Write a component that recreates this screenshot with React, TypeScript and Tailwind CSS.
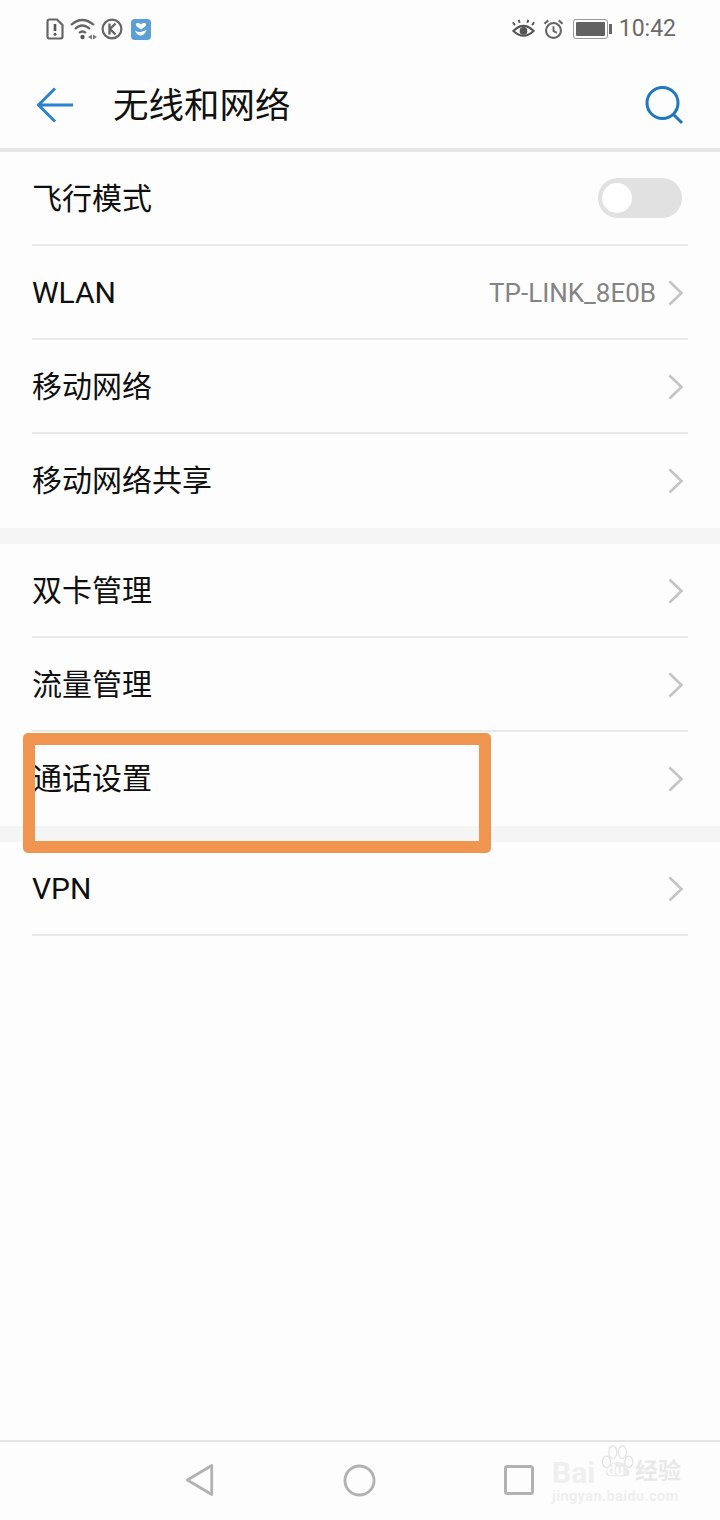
const font = "font-['Roboto','Noto_Sans_CJK_SC',sans-serif]";

const Chevron = () => (
	<svg width="18" height="28" viewBox="0 0 18 28" fill="none" className="mr-[3px] shrink-0">
		<path d="M2.5 2.5 L14.5 14 L2.5 25.5" stroke="#c4c4c4" strokeWidth="2.6" />
	</svg>
);

type RowProps = {
	label: string;
	value?: string;
	last?: boolean;
	height: string;
};

const Row = ({ label, value, last, height }: RowProps) => (
	<div className={`mx-8 flex items-center justify-between ${height} ${last ? '' : 'border-b-2 border-[#e9e9e9] pt-[2px]'}`}>
		<span className="text-[30px] leading-none text-[#0f0f0f]">{label}</span>
		<div className="flex items-center">
			{value && <span className="mr-[11px] text-[26px] leading-none text-[#848484]">{value}</span>}
			<Chevron />
		</div>
	</div>
);

const StatusLeft = () => (
	<div className="flex items-center gap-[3px]">
		<svg width="18" height="22" viewBox="0 0 18 22" fill="none">
			<path d="M3.5 1.5 H11 L16.500 7 V18.5 Q16.500 20.500 14.5 20.500 H3.5 Q1.500 20.500 1.500 18.5 V3.5 Q1.500 1.500 3.5 1.500 Z" stroke="#666" strokeWidth="2.2" />
			<path d="M9 6 V13" stroke="#555" strokeWidth="2.6" />
			<circle cx="9" cy="16.3" r="1.5" fill="#555" />
		</svg>
		<svg width="28" height="24" viewBox="0 0 28 24" fill="none" className="ml-[3px]">
			<path d="M1 8 Q12 -2 24 8" stroke="#666" strokeWidth="2.2" />
			<path d="M5 12 Q12 5 20 12" stroke="#666" strokeWidth="2.2" />
			<path d="M9 16 Q12.500 13 16 16" stroke="#666" strokeWidth="2.2" />
			<circle cx="12.500" cy="20" r="2.200" fill="#555" />
			<path d="M18 20 L22 17.500 V22.500 Z M23 17.500 L27 20 L23 22.500 Z" fill="#777" />
		</svg>
		<svg width="22" height="22" viewBox="0 0 22 22" fill="none">
			<circle cx="11" cy="11" r="9.400" stroke="#666" strokeWidth="2.200" />
			<path d="M8.500 5.500 V16.500 M14.500 5.500 L9 11 L14.500 16.500" stroke="#666" strokeWidth="2.400" />
		</svg>
		<svg width="20" height="21" viewBox="0 0 20 21" fill="none" className="ml-[5px]">
			<rect width="20" height="21" rx="4" fill="#5a9fd6" />
			<path d="M10 10.500 C6 8 4.500 6.500 5 5 C5.500 3.500 8.500 3.500 10 5.500 C11.500 3.500 14.500 3.500 15 5 C15.500 6.500 14 8 10 10.500 Z" fill="#fff" />
			<path d="M4 11.500 Q7 13.500 10 13 L15.500 11 Q13.500 16.500 9.500 16.500 Q6 16.500 4 11.500 Z" fill="#fff" />
		</svg>
	</div>
);

const StatusRight = () => (
	<div className="flex items-center">
		<svg width="23" height="22" viewBox="0 0 24 22" fill="none">
			<path d="M1.500 13 Q12 2.500 22.500 13 Q12 23 1.500 13 Z" stroke="#555" strokeWidth="2.200" />
			<circle cx="12" cy="13" r="4" fill="#555" />
			<path d="M3 7 L1 4 M8 4.500 L7 1.500 M16 4.500 L17 1.500 M21 7 L23 4" stroke="#555" strokeWidth="2" />
		</svg>
		<svg width="21" height="22" viewBox="0 0 22 22" fill="none" className="ml-[8px]">
			<circle cx="11" cy="12.500" r="7.800" stroke="#666" strokeWidth="2.200" />
			<path d="M11 8 V13 L14.500 15" stroke="#666" strokeWidth="2" />
			<path d="M1.500 5.500 L5.500 2 M20.500 5.500 L16.500 2" stroke="#666" strokeWidth="2.200" />
		</svg>
		<div className="ml-[9px] flex items-center">
			<div className="h-[20px] w-[35px] rounded-[3px] border border-[#999] p-[2px]">
				<div className="h-full w-full rounded-[1px] bg-[#626262]" />
			</div>
			<div className="ml-[1px] h-[10px] w-[3px] bg-[#666]" />
		</div>
		<span className="ml-[7px] text-[23px] leading-none text-[#6a6a6a]">10:42</span>
	</div>
);

const Watermark = () => (
	<div className="absolute left-[552px] top-[1443px] h-[60px] w-[130px]">
		<svg width="40" height="36" viewBox="0 0 50 42" fill="none" className="absolute left-[44px] top-0">
			<ellipse cx="13" cy="22" rx="5" ry="7" stroke="#e2e2e2" strokeWidth="1.500" />
			<ellipse cx="21" cy="10" rx="5" ry="8" stroke="#e2e2e2" strokeWidth="1.500" />
			<ellipse cx="33" cy="10" rx="5" ry="8" stroke="#e2e2e2" strokeWidth="1.500" />
			<ellipse cx="41" cy="22" rx="5" ry="7" stroke="#e2e2e2" strokeWidth="1.500" />
			<path d="M12 36 Q15 22 27 22 Q39 22 42 36 Q42 42 27 40 Q12 42 12 36 Z" fill="#ececec" />
		</svg>
		<div className="absolute left-0 top-[15px] text-[30px] font-bold leading-none text-[#efefef]">Bai</div>
		<div className="absolute left-[55px] top-[20px] text-[15px] font-bold leading-none text-[#fdfdfd]">du</div>
		<div className="absolute left-[83px] top-[17px] text-[23px] font-bold leading-none text-[#e9e9e9]">经验</div>
		<div className="absolute left-0 top-[47px] text-[14.500px] font-bold leading-none tracking-[0.400px] text-[#efefef]">jingyan.baidu.com</div>
	</div>
);

export default function App() {
	return (
		<div className={`relative flex h-[1520px] w-[720px] flex-col overflow-hidden bg-[#fdfdfd] ${font}`}>
			<div className="flex h-[56px] items-start justify-between pl-[46px] pr-[44px] pt-[17px]">
				<StatusLeft />
				<StatusRight />
			</div>

			<div className="flex h-[92px] items-center pt-[5px]">
				<svg width="40" height="36" viewBox="0 0 40 36" fill="none" className="ml-[36px]">
					<path d="M37 18 H2.500 M19 1.500 L2.500 18 L19 34.500" stroke="#2b82d0" strokeWidth="3" />
				</svg>
				<span className="ml-[37px] pt-[5px] text-[35.500px] leading-none text-[#111]">无线和网络</span>
				<svg width="40" height="40" viewBox="0 0 40 40" fill="none" className="ml-auto mr-[36px]">
					<circle cx="18.500" cy="18" r="15.500" stroke="#1f77c0" strokeWidth="3" />
					<path d="M29.500 29.500 L38 38" stroke="#1f77c0" strokeWidth="3" />
				</svg>
			</div>
			<div className="h-1 bg-[#e5e5e5]" />

			<div className="mx-8 flex h-[94px] items-center justify-between border-b-2 border-[#e9e9e9]">
				<span className="pt-[2px] text-[30px] leading-none text-[#0f0f0f]">飞行模式</span>
				<div className="mr-[6px] flex h-10 w-[84px] items-center rounded-full bg-[#e1e1e1] pl-[4px]">
					<div className="h-[30px] w-[30px] rounded-full bg-white" />
				</div>
			</div>
			<Row label="WLAN" value="TP-LINK_8E0B" height="h-[94px]" />
			<Row label="移动网络" height="h-[94px]" />
			<Row label="移动网络共享" height="h-[94px]" last />

			<div className="h-4 bg-[#f5f5f5]" />

			<Row label="双卡管理" height="h-[94px]" />
			<Row label="流量管理" height="h-[94px]" />
			<Row label="通话设置" height="h-[94px]" last />

			<div className="h-4 bg-[#f5f5f5]" />

			<Row label="VPN" height="h-[94px]" />

			<div className="mt-auto flex h-[80px] items-center border-t-2 border-[#e5e5e5] pb-[2px]">
				<svg width="30" height="34" viewBox="0 0 32 36" fill="none" className="ml-[185px]">
					<path d="M28.500 2.500 V33.500 L2.500 18 Z" stroke="#b2b2b2" strokeWidth="3" strokeLinejoin="round" />
				</svg>
				<svg width="33" height="33" viewBox="0 0 34 34" fill="none" className="ml-[128px]">
					<circle cx="17" cy="17" r="15" stroke="#b2b2b2" strokeWidth="3" />
				</svg>
				<svg width="30" height="30" viewBox="0 0 30 30" fill="none" className="ml-[128px]">
					<rect x="1.500" y="1.500" width="27" height="27" rx="2" stroke="#b2b2b2" strokeWidth="3" />
				</svg>
			</div>

			<Watermark />

			{/* orange highlight drawn over the screenshot */}
			<div className="absolute left-[23px] top-[733px] h-[120px] w-[468px] rounded-[5px] border-[12px] border-[#f0954f]" />
		</div>
	);
}
